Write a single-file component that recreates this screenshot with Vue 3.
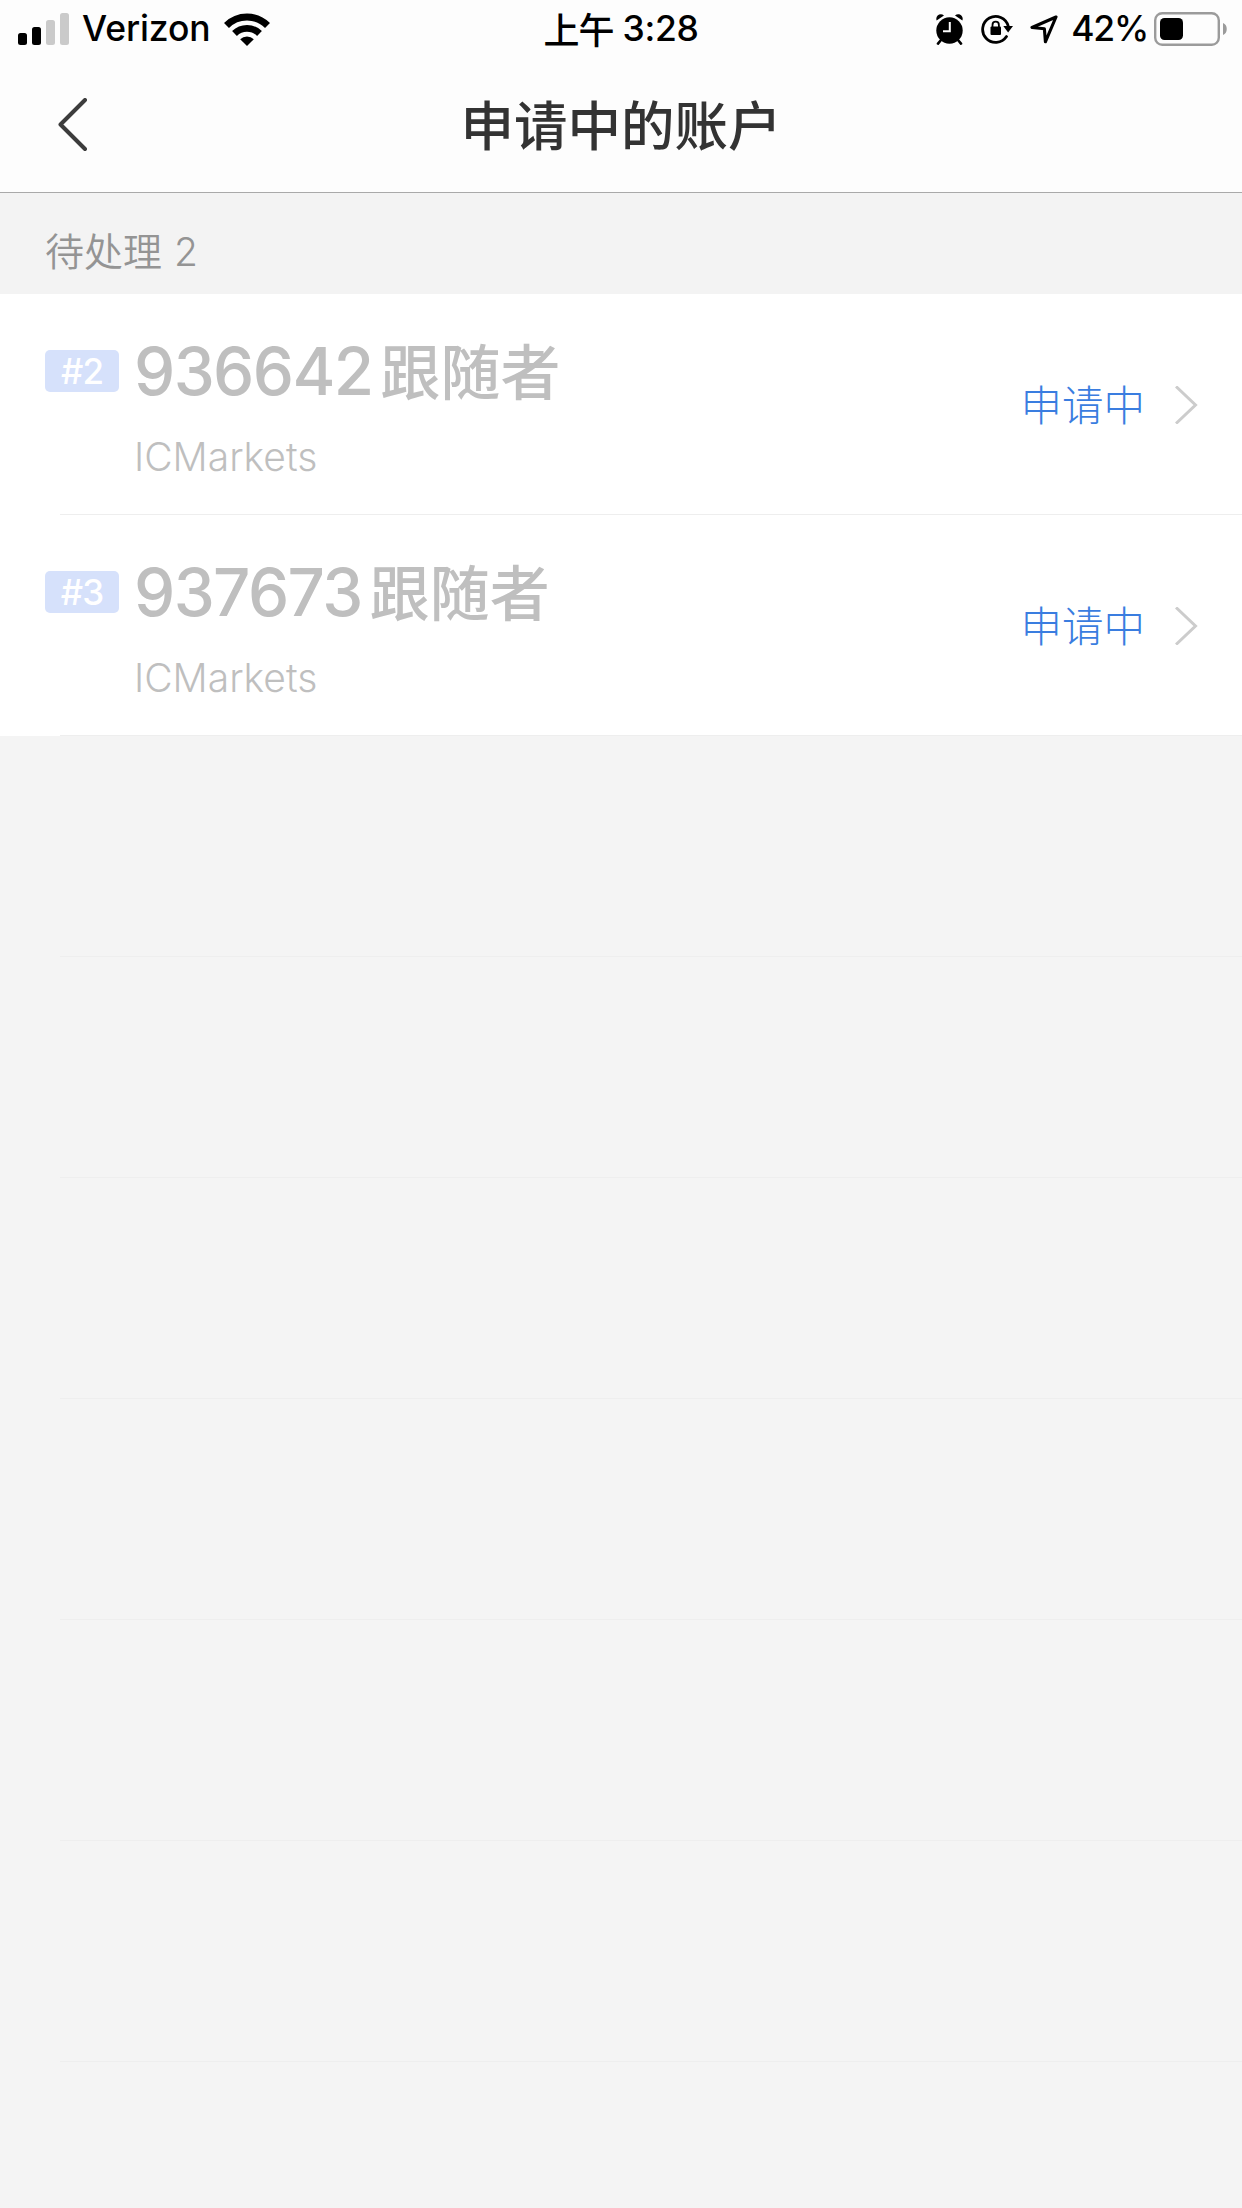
<template>
  <div class="page">
    <header class="top">
      <div class="status-bar">
        <div class="side left">
          <svg class="signal" width="51" height="32" viewBox="0 0 51 32">
            <rect x="0" y="20" width="9" height="12" rx="2.5" />
            <rect x="14" y="14" width="9" height="18" rx="2.5" />
            <rect x="28" y="7" width="9" height="25" rx="2.5" fill="#cacaca" />
            <rect x="42" y="0" width="9" height="32" rx="2.5" fill="#cacaca" />
          </svg>
          <span class="carrier">Verizon</span>
          <svg class="wifi" width="46" height="33" viewBox="0 0 46 33">
            <path d="M2.5 12.5a29 29 0 0 1 41 0" fill="none" stroke="#000" stroke-width="7" />
            <path d="M10.5 20.5a17.7 17.7 0 0 1 25 0" fill="none" stroke="#000" stroke-width="6.8" />
            <path d="M23 33l-6.8-6.8a9.6 9.6 0 0 1 13.6 0z" />
          </svg>
        </div>
        <div class="clock"><span class="zh">上午</span><span>3:28</span></div>
        <div class="side right">
          <svg class="alarm" width="27" height="31" viewBox="0 0 27 31">
            <circle cx="13.5" cy="16.5" r="13.2" />
            <path d="M0.6 6.5C-1 2 4 -1.5 8 1.4zM26.4 6.5C28 2 23 -1.5 19 1.4z" />
            <path d="M5 26l-3 3.6M22 26l3 3.6" stroke="#000" stroke-width="2.6" stroke-linecap="round" />
            <path d="M13.8 8v9.2H7" fill="none" stroke="#fdfdfd" stroke-width="2" />
          </svg>
          <svg class="lock" width="32" height="30" viewBox="0 0 32 30">
            <path d="M25.5 22.6A13 13 0 1 1 27.2 12" fill="none" stroke="#000" stroke-width="2.8" stroke-linecap="round" />
            <path d="M22.3 12H32l-4.9 6.6z" />
            <rect x="9.5" y="12.5" width="10.5" height="8.5" rx="1" />
            <path d="M11.5 13.5v-2.6a3.2 3.2 0 0 1 6.4 0v2.6" fill="none" stroke="#000" stroke-width="1.8" />
          </svg>
          <svg class="arrow" width="28" height="29" viewBox="0 0 28 29">
            <path d="M26 2L2 12.5l12.4 1.3 1 13z" fill="none" stroke="#000" stroke-width="3.1" stroke-linejoin="round" />
          </svg>
          <span class="percent">42%</span>
          <svg class="battery" width="74" height="34" viewBox="0 0 74 34">
            <rect x="1.2" y="1.2" width="63.6" height="31.6" rx="7" fill="none" stroke="#9b9b9b" stroke-width="2.4" />
            <rect x="6" y="6" width="23" height="22" rx="4.5" />
            <path d="M69 11c5 1.5 5 10.5 0 12z" fill="#9b9b9b" />
          </svg>
        </div>
      </div>
      <div class="nav">
        <svg class="back" width="30" height="54" viewBox="0 0 30 54">
          <path d="M27 2L2.5 26.5 27 51" />
        </svg>
        <h1>申请中的账户</h1>
      </div>
    </header>

    <div class="section">待处理 <span class="count">{{ accounts.length }}</span></div>

    <div class="row account" v-for="item in accounts" :key="item.number">
      <span class="badge">#{{ item.index }}</span>
      <div class="info">
        <div class="name"><span class="number">{{ item.number }}</span><span class="role">{{ item.role }}</span></div>
        <div class="broker">{{ item.broker }}</div>
      </div>
      <span class="state">申请中</span>
      <svg class="more" width="24" height="38" viewBox="0 0 24 38">
        <path d="M1 0.5L20.5 19 1 37.5" />
      </svg>
    </div>

    <div class="row" v-for="n in 7" :key="'empty' + n"></div>
  </div>
</template>

<script setup>
const accounts = [
  { index: 2, number: '936642', role: '跟随者', broker: 'ICMarkets' },
  { index: 3, number: '937673', role: '跟随者', broker: 'ICMarkets' },
];
</script>

<style>
body { margin: 0; background: #f4f4f4; }
</style>

<style scoped>
.page {
  width: 1242px;
  height: 2208px;
  overflow: hidden;
  background: #f4f4f4;
  font-family: Inter, "Noto Sans CJK SC", sans-serif;
}

.page svg { display: block; flex-shrink: 0; }

.top {
  box-sizing: border-box;
  height: 193px;
  background: #fdfdfd;
  border-bottom: 1px solid #a9a9a9;
}

.status-bar {
  display: grid;
  grid-template-columns: 1fr auto 1fr;
  height: 58px;
  box-sizing: border-box;
  padding: 0 14px 0 18px;
  align-items: center;
  color: #000;
  font-size: 35.5px;
  font-weight: 450;
  line-height: 58px;
}

.side { display: flex; align-items: center; }
.right { justify-content: flex-end; }
.carrier { margin-left: 13px; letter-spacing: -0.1px; }
.wifi { margin-left: 13px; }
.clock { display: flex; gap: 9px; margin-right: 4px; letter-spacing: -0.3px; }
.zh { font-family: "Noto Sans CJK SC", sans-serif; font-size: 36px; font-weight: 500; line-height: 56px; letter-spacing: -1px; }
.lock { margin-left: 18px; }
.arrow { margin-left: 17px; }
.percent { margin-left: 13px; letter-spacing: -1.2px; }
.battery { margin-left: 6px; }

.nav {
  display: grid;
  grid-template-columns: 1fr auto 1fr;
  align-items: center;
  height: 134px;
}

.back { margin-left: 58px; fill: none; stroke: #3c3c3c; stroke-width: 4; stroke-linecap: round; stroke-linejoin: round; }
h1 { margin: 0; padding-top: 4px; color: #333; font-size: 53.5px; font-weight: 500; line-height: 130px; }

.section {
  height: 101px;
  padding-left: 45px;
  background: #f3f3f3;
  color: #949494;
  font-size: 39px;
  line-height: 117px;
  font-weight: 350;
}

.count { margin-left: 1px; }

.row {
  position: relative;
  box-sizing: border-box;
  height: 221px;
}

.row::after {
  content: "";
  position: absolute;
  left: 60px;
  right: 0;
  bottom: 0;
  height: 1px;
  background: #eeeeee;
}

.account {
  display: flex;
  padding: 0 43px 0 45px;
  background: #fff;
}

.badge {
  width: 74px;
  height: 42px;
  margin-top: 56px;
  border-radius: 5px;
  background: #d6e1fb;
  color: #fff;
  font-size: 35px;
  font-weight: 500;
  line-height: 43px;
  letter-spacing: -1px;
  text-align: center;
}

.info { flex: 1; padding: 37px 0 0 15px; color: #bfbfbf; }
.name { display: flex; align-items: center; height: 80px; font-weight: 500; }
.number { font-size: 65.5px; letter-spacing: -1.6px; }
.role { padding-bottom: 6px; font-size: 60px; margin-left: 8px; }
.broker { margin-top: 16px; font-size: 39px; font-weight: 300; line-height: 60px; }
.state { color: #3a7de0; font-size: 41.5px; font-weight: 300; line-height: 225px; margin-right: 30px; }
.more { align-self: center; fill: none; stroke: #ccc; stroke-width: 3; }
</style>
